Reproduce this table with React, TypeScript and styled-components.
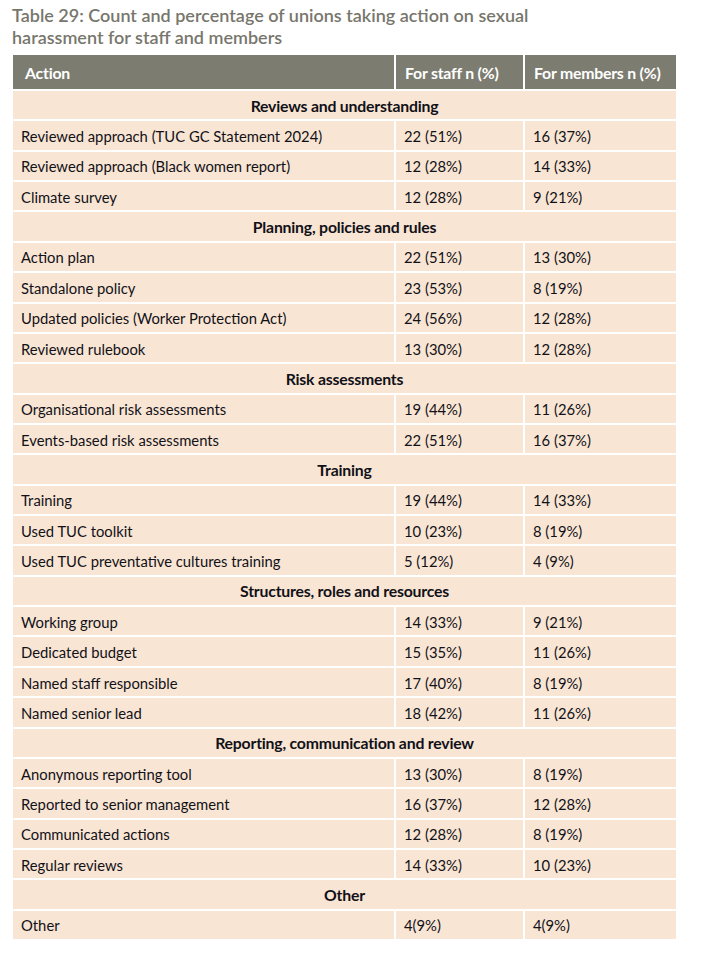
import React from "react";
import styled, { createGlobalStyle } from "styled-components";

const GlobalStyle = createGlobalStyle`
    body {
        margin: 0;
        background: #ffffff;
        font-family: "Lato", "Noto Sans", sans-serif;
    }
`

const Page = styled.div`
    padding: 4px 0 0 12px;
    width: 702px;
    box-sizing: border-box;
`

const Title = styled.h2`
    margin: 0 0 7px 0;
    font-size: 18px;
    line-height: 22px;
    font-weight: 600;
    color: #77766c;
    width: 600px;
`

const Grid = styled.div`
    margin-left: 1px;
    display: grid;
    grid-template-columns: 381px 127px 151px;
    gap: 2px;
`

const HeadCell = styled.div<{ $first?: boolean }>`
    height: 34px;
    display: flex;
    align-items: center;
    padding-left: ${props => (props.$first ? "12px" : "9px")};
    background: #7c7c70;
    color: #ffffff;
    font-weight: 700;
    font-size: 15.8px;
    letter-spacing: -0.2px;
`

const SectionCell = styled.div`
    grid-column: 1 / -1;
    height: 28.36px;
    display: flex;
    align-items: center;
    justify-content: center;
    background: #f9e5d3;
    color: #111118;
    font-weight: 700;
    font-size: 15.8px;
    letter-spacing: -0.2px;
`

const Cell = styled.div`
    height: 28.36px;
    display: flex;
    align-items: center;
    padding-left: 8px;
    padding-top: 1px;
    box-sizing: border-box;
    background: #f9e5d3;
    color: #111118;
    font-size: 14.8px;
`

type Row = [string, string, string]

const sections: { name: string, rows: Row[] }[] = [
    {
        name: "Reviews and understanding",
        rows: [
            ["Reviewed approach (TUC GC Statement 2024)", "22 (51%)", "16 (37%)"],
            ["Reviewed approach (Black women report)", "12 (28%)", "14 (33%)"],
            ["Climate survey", "12 (28%)", "9 (21%)"],
        ],
    },
    {
        name: "Planning, policies and rules",
        rows: [
            ["Action plan", "22 (51%)", "13 (30%)"],
            ["Standalone policy", "23 (53%)", "8 (19%)"],
            ["Updated policies (Worker Protection Act)", "24 (56%)", "12 (28%)"],
            ["Reviewed rulebook", "13 (30%)", "12 (28%)"],
        ],
    },
    {
        name: "Risk assessments",
        rows: [
            ["Organisational risk assessments", "19 (44%)", "11 (26%)"],
            ["Events-based risk assessments", "22 (51%)", "16 (37%)"],
        ],
    },
    {
        name: "Training",
        rows: [
            ["Training", "19 (44%)", "14 (33%)"],
            ["Used TUC toolkit", "10 (23%)", "8 (19%)"],
            ["Used TUC preventative cultures training", "5 (12%)", "4 (9%)"],
        ],
    },
    {
        name: "Structures, roles and resources",
        rows: [
            ["Working group", "14 (33%)", "9 (21%)"],
            ["Dedicated budget", "15 (35%)", "11 (26%)"],
            ["Named staff responsible", "17 (40%)", "8 (19%)"],
            ["Named senior lead", "18 (42%)", "11 (26%)"],
        ],
    },
    {
        name: "Reporting, communication and review",
        rows: [
            ["Anonymous reporting tool", "13 (30%)", "8 (19%)"],
            ["Reported to senior management", "16 (37%)", "12 (28%)"],
            ["Communicated actions", "12 (28%)", "8 (19%)"],
            ["Regular reviews", "14 (33%)", "10 (23%)"],
        ],
    },
    {
        name: "Other",
        rows: [["Other", "4(9%)", "4(9%)"]],
    },
]

export default function App() {
    return (
        <Page>
            <GlobalStyle />
            <Title>Table 29: Count and percentage of unions taking action on sexual harassment for staff and members</Title>
            <Grid>
                <HeadCell $first>Action</HeadCell>
                <HeadCell>For staff n (%)</HeadCell>
                <HeadCell>For members n (%)</HeadCell>
                {sections.map(section => (
                    <React.Fragment key={section.name}>
                        <SectionCell>{section.name}</SectionCell>
                        {section.rows.map(row => (
                            <React.Fragment key={section.name + row[0]}>
                                <Cell>{row[0]}</Cell>
                                <Cell>{row[1]}</Cell>
                                <Cell>{row[2]}</Cell>
                            </React.Fragment>
                        ))}
                    </React.Fragment>
                ))}
            </Grid>
        </Page>
    )
}
